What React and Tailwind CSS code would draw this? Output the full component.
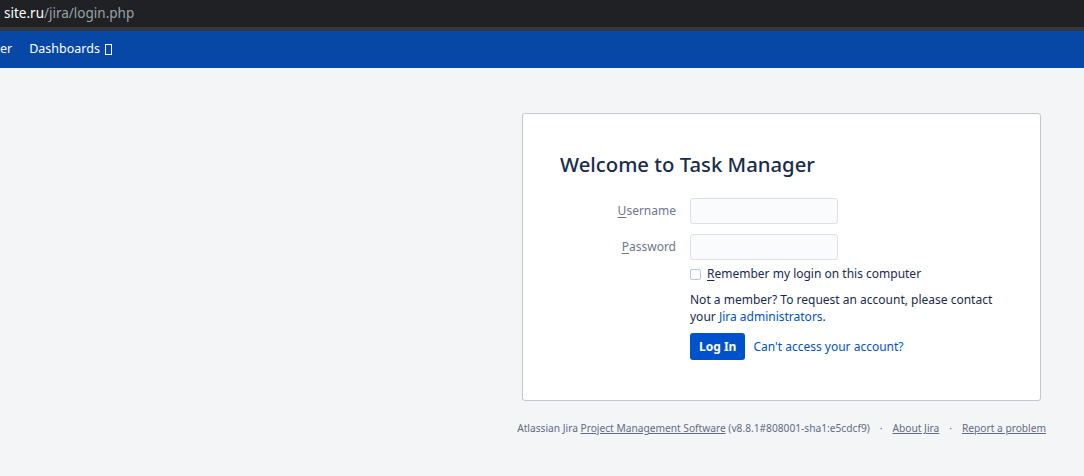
import React, { useState } from "react";

const font = { fontFamily: '"Noto Sans", "Open Sans", sans-serif' };

function App() {
  const [remember, setRemember] = useState(false);

  return (
    <div className="min-h-[476px] bg-[#f4f5f7] text-[#172b4d]" style={font}>
      {/* Browser address bar */}
      <div className="h-[27px] bg-[#202124] flex items-center pl-[4px] text-[13.5px] leading-none">
        <span className="text-white">site.ru</span>
        <span className="text-[#9aa0a6]">/jira/login.php</span>
      </div>
      <div className="h-[4px] bg-[#35363a]" />

      {/* Jira nav */}
      <div className="h-[37px] bg-[#0747a6] flex items-center text-white text-[12.5px]">
        <span>er</span>
        <span className="ml-[17px] flex items-center">
          Dashboards
          <span className="ml-[5px] inline-block w-[7px] h-[11px] border border-white" />
        </span>
      </div>

      <div className="flex flex-col items-end pr-[43px] pt-[45px]">
        {/* Login card */}
        <div className="w-[519px] h-[288px] bg-white border border-[#c1c7d0] rounded-[3px] pl-[37px] pt-[36px]">
          <h1 className="text-[20.3px] leading-[28px] font-medium text-[#172b4d]">Welcome to Task Manager</h1>

          <div className="mt-[20px] flex flex-col gap-[10px]">
            <div className="flex items-center">
              <label className="w-[130px] text-right pr-[14px] text-[12px] text-[#6b778c]">
                <span className="underline underline-offset-2">U</span>sername
              </label>
              <input className="w-[148px] h-[26px] bg-[#fafbfc] border border-[#dfe1e6] rounded-[3px] outline-none" />
            </div>
            <div className="flex items-center">
              <label className="w-[130px] text-right pr-[14px] text-[12px] text-[#6b778c]">
                <span className="underline underline-offset-2">P</span>assword
              </label>
              <input type="password" className="w-[148px] h-[26px] bg-[#fafbfc] border border-[#dfe1e6] rounded-[3px] outline-none" />
            </div>
          </div>

          <div className="ml-[130px]">
            <label className="mt-[5px] flex items-center text-[12px] text-[#172b4d]">
              <span
                onClick={() => setRemember(!remember)}
                className="w-[11px] h-[11px] border border-[#c1c7d0] rounded-[2px] bg-[#fafbfc]"
              />
              <span className="ml-[6px]">
                <span className="underline underline-offset-2">R</span>emember my login on this computer
              </span>
            </label>

            <p className="mt-[8px] text-[12px] leading-[17px] text-[#172b4d]">
              Not a member? To request an account, please contact
              <br />
              your <a className="text-[#0052cc]">Jira administrators</a>.
            </p>

            <div className="mt-[8px] flex items-center">
              <button className="h-[27px] px-[9px] bg-[#0052cc] text-white text-[12px] font-bold rounded-[3px]">
                Log In
              </button>
              <a className="ml-[8px] text-[12px] text-[#0052cc]">Can't access your account?</a>
            </div>
          </div>
        </div>

        {/* Footer */}
        <div className="mt-[20px] -mr-[5px] text-[10.2px] text-[#5e6c84] flex items-center">
          <span>
            Atlassian Jira <a className="underline">Project Management Software</a> (v8.8.1#808001-sha1:e5cdcf9)
          </span>
          <span className="mx-[10px]">·</span>
          <a className="underline">About Jira</a>
          <span className="mx-[10px]">·</span>
          <a className="underline">Report a problem</a>
        </div>
      </div>
    </div>
  );
}

export default App;
